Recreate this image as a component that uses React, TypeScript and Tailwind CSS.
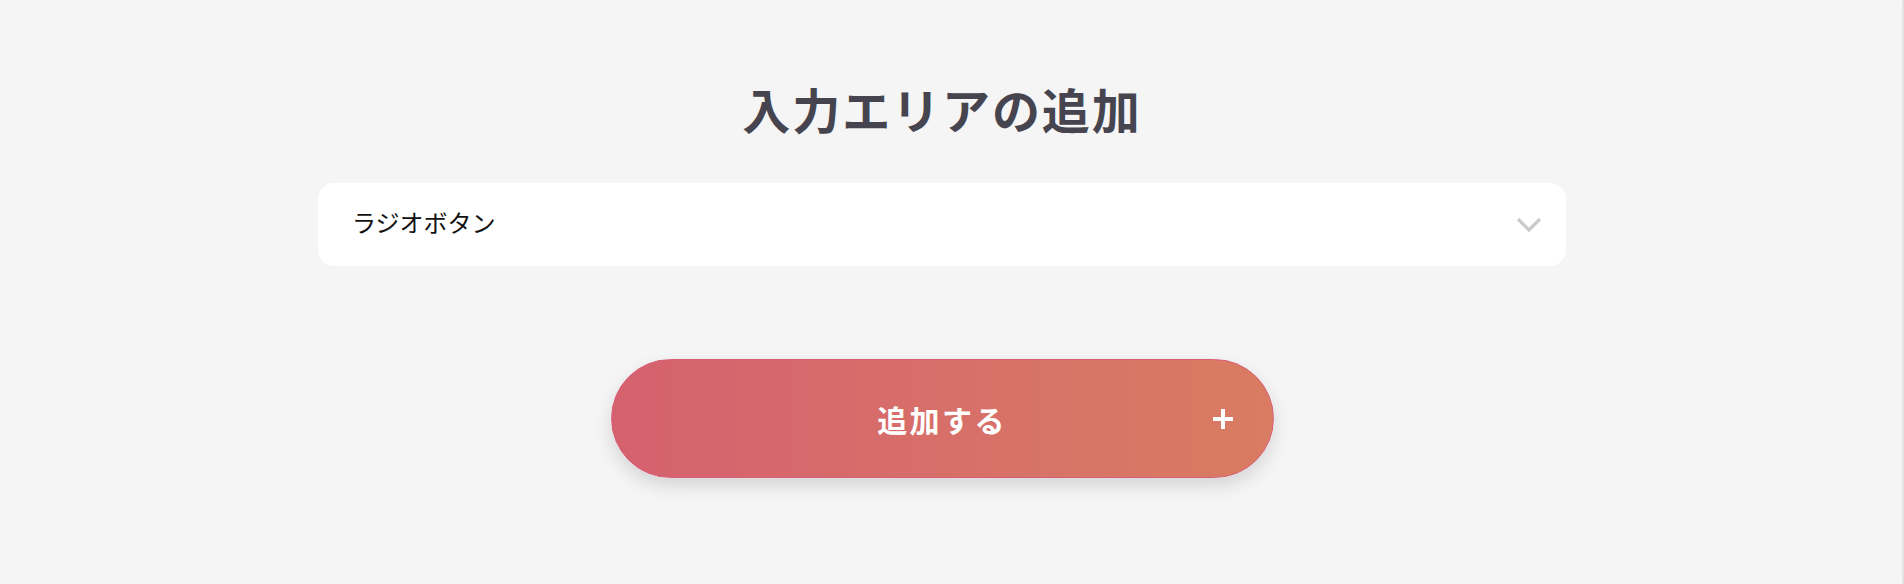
import React from "react";

export default function App() {
  return (
    <div
      className="flex h-[584px] w-[1904px] bg-[#f7f7f7]"
      style={{ fontFamily: '"Noto Sans CJK JP", "Noto Sans", sans-serif' }}
    >
      <div className="h-full w-[1902px] rounded-r-[10px] bg-[#f5f5f5]">
        <div className="flex w-[1884px] flex-col items-center pt-[76px]">
          <h1 className="text-[48px] font-bold leading-[64px] tracking-[0.04em] text-[#46444f]">
            入力エリアの追加
          </h1>
          <div className="mt-[43px] flex h-[83px] w-[1248px] items-center justify-between rounded-[16px] bg-white pl-[34px] pr-[24px]">
            <span className="relative -top-[3px] text-[24px] font-normal leading-none text-[#111111]">ラジオボタン</span>
            <svg width="26" height="16" viewBox="0 0 26 16" fill="none">
              <path d="M2 2 L13 13 L24 2" stroke="#cbcbcb" strokeWidth="3.2" />
            </svg>
          </div>
          <button className="relative mt-[93px] flex h-[119px] w-[663px] items-center justify-center rounded-full border border-[#d95f78] bg-gradient-to-r from-[#d5616f] to-[#d97c62] shadow-[0_8px_18px_rgba(0,0,0,0.13)]">
            <span className="text-[30px] font-bold leading-none tracking-[0.08em] text-white">追加する</span>
            <svg
              className="absolute right-[40px] top-1/2 -translate-y-1/2"
              width="20"
              height="20"
              viewBox="0 0 20 20"
            >
              <path d="M10 0 V20 M0 10 H20" stroke="#ffffff" strokeWidth="4" />
            </svg>
          </button>
        </div>
      </div>
      <div className="h-full w-[2px] bg-[#e2e2e2]" />
    </div>
  );
}
